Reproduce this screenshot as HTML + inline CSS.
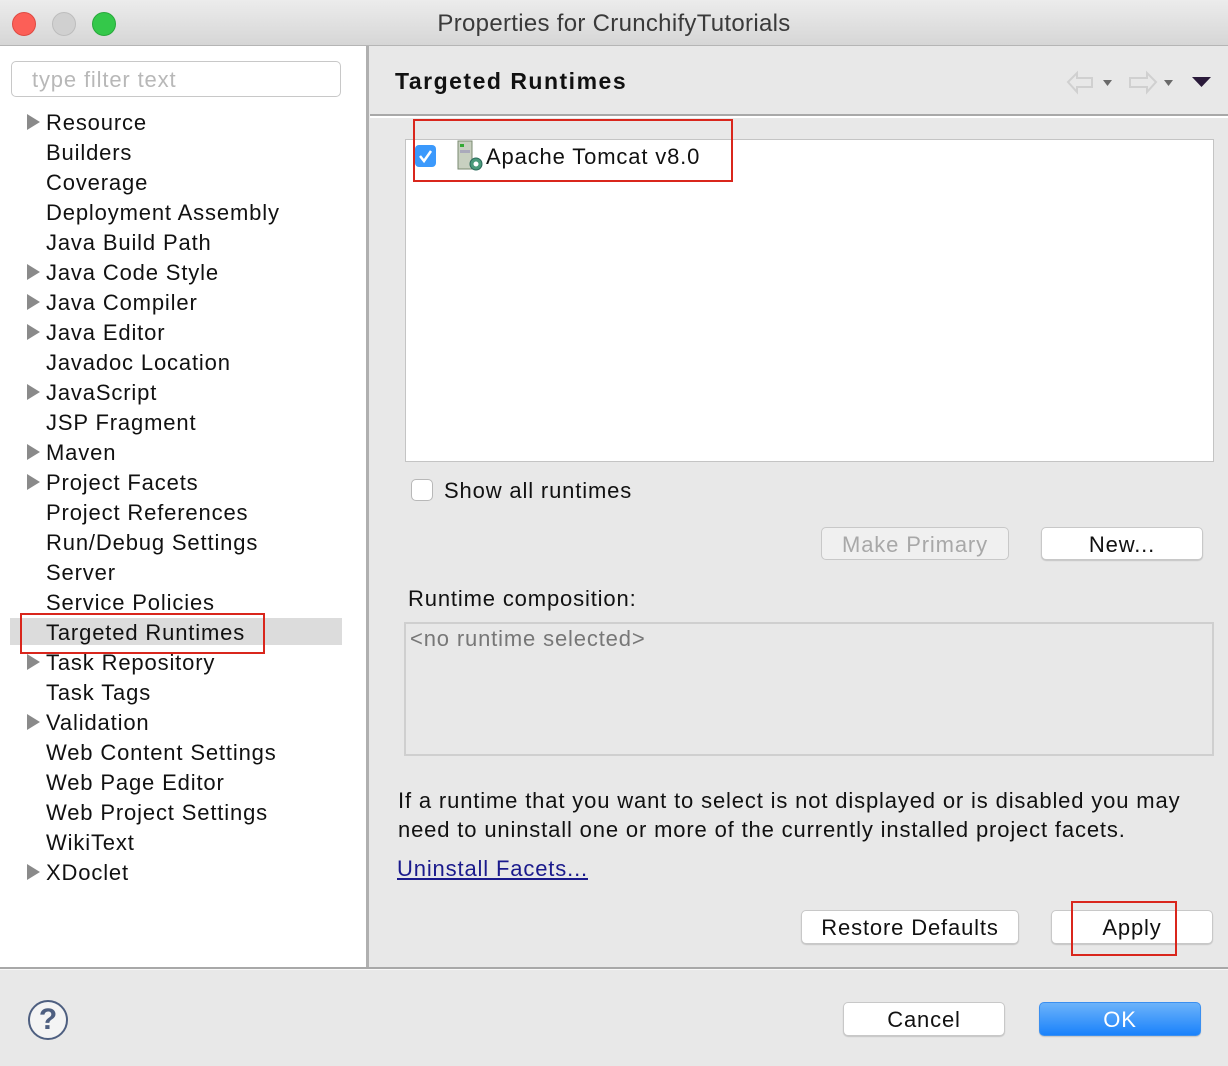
<!DOCTYPE html><html><head><style>
body{margin:0;width:1228px;height:1066px;position:relative;overflow:hidden;background:#e8e8e8;font-family:"Liberation Sans",sans-serif;color:#111;letter-spacing:0.85px}
.a{position:absolute;white-space:nowrap}
.t{font-size:22px;line-height:30px;left:46px}
.tri{position:absolute;left:27px;width:0;height:0;border-top:8px solid transparent;border-bottom:8px solid transparent;border-left:13px solid #8a8a8a}
.btn{position:absolute;background:#fff;border:1px solid #c8c8c8;border-radius:5px;box-shadow:0 1px 1px rgba(0,0,0,.15);font-size:22px;text-align:center;line-height:33px;box-sizing:border-box}
.red{position:absolute;border:2px solid #d9261c;box-sizing:border-box}
</style></head><body>
<div class="a" style="left:0;top:0;width:1228px;height:45px;background:linear-gradient(#ececec,#d6d6d6);border-bottom:1px solid #b5b5b5"></div>
<div class="a" style="left:12px;top:12px;width:24px;height:24px;border-radius:50%;background:#fc5f57;border:1px solid #de4a42;box-sizing:border-box"></div>
<div class="a" style="left:52px;top:12px;width:24px;height:24px;border-radius:50%;background:#d0d0d0;border:1px solid #bdbdbd;box-sizing:border-box"></div>
<div class="a" style="left:92px;top:12px;width:24px;height:24px;border-radius:50%;background:#34c84a;border:1px solid #28a83b;box-sizing:border-box"></div>
<div class="a" style="left:0;width:1228px;top:10px;text-align:center;font-size:24px;color:#3a3a3a;letter-spacing:0.3px">Properties for CrunchifyTutorials</div>
<div class="a" style="left:0;top:46px;width:366px;height:922px;background:#fff"></div>
<div class="a" style="left:366px;top:46px;width:3px;height:922px;background:#b0b0b0"></div>
<div class="a" style="left:11px;top:61px;width:330px;height:36px;border:1px solid #c8c8c8;border-radius:5px;box-sizing:border-box;background:#fff"></div>
<div class="a" style="left:32px;top:67px;font-size:22px;color:#b8b8b8">type filter text</div>
<div class="a" style="left:10px;top:618px;width:332px;height:27px;background:#dcdcdc"></div>
<div class="tri" style="top:114px"></div><div class="tri" style="top:264px"></div><div class="tri" style="top:294px"></div><div class="tri" style="top:324px"></div><div class="tri" style="top:384px"></div><div class="tri" style="top:444px"></div><div class="tri" style="top:474px"></div><div class="tri" style="top:654px"></div><div class="tri" style="top:714px"></div><div class="tri" style="top:864px"></div>
<div class="a t" style="top:108px">Resource<br>Builders<br>Coverage<br>Deployment Assembly<br>Java Build Path<br>Java Code Style<br>Java Compiler<br>Java Editor<br>Javadoc Location<br>JavaScript<br>JSP Fragment<br>Maven<br>Project Facets<br>Project References<br>Run/Debug Settings<br>Server<br>Service Policies<br>Targeted Runtimes<br>Task Repository<br>Task Tags<br>Validation<br>Web Content Settings<br>Web Page Editor<br>Web Project Settings<br>WikiText<br>XDoclet</div>
<div class="red" style="left:20px;top:613px;width:245px;height:41px"></div>
<div class="a" style="left:395px;top:68px;font-size:23px;font-weight:bold;letter-spacing:1.5px">Targeted Runtimes</div>
<svg class="a" style="left:1064px;top:68px" width="150" height="30"><path d="M4 14 L13 5 V10 H28 V19 H13 V24 Z" fill="none" stroke="#d0d0d0" stroke-width="2"/><path d="M39 12 h9 l-4.5 6z" fill="#6a6a6a"/><path d="M92 14 L83 5 V10 H66 V19 H83 V24 Z" fill="none" stroke="#d0d0d0" stroke-width="2"/><path d="M100 12 h9 l-4.5 6z" fill="#6a6a6a"/><path d="M128 9 h19 l-9.5 10z" fill="#2a1a3a"/></svg>
<div class="a" style="left:370px;top:114px;width:858px;height:2px;background:#a8a8a8"></div>
<div class="a" style="left:370px;top:116px;width:858px;height:2px;background:#fff"></div>
<div class="a" style="left:405px;top:139px;width:809px;height:323px;background:#fff;border:1px solid #c4c4c4;box-sizing:border-box"></div>
<div class="a" style="left:415px;top:145px;width:21px;height:22px;border-radius:4px;background:#3b99fc"></div>
<svg class="a" style="left:415px;top:145px" width="21" height="22"><path d="M5 11 L9 16 L16 6" fill="none" stroke="#fff" stroke-width="2.5"/></svg>
<svg class="a" style="left:457px;top:139px" width="28" height="34"><rect x="1" y="2" width="14" height="28" fill="#c8d0c0" stroke="#7a8a70"/><rect x="3" y="5" width="4" height="3" fill="#3a3"/><rect x="3" y="11" width="10" height="3" fill="#aab"/><circle cx="19" cy="25" r="6" fill="#4a9a7a" stroke="#2a6a5a"/><circle cx="19" cy="25" r="2.5" fill="#fff"/></svg>
<div class="a" style="left:486px;top:144px;font-size:22px">Apache Tomcat v8.0</div>
<div class="red" style="left:413px;top:119px;width:320px;height:63px"></div>
<div class="a" style="left:411px;top:479px;width:22px;height:22px;border:1px solid #b8b8b8;border-radius:5px;background:#fff;box-sizing:border-box"></div>
<div class="a" style="left:444px;top:478px;font-size:22px">Show all runtimes</div>
<div class="btn" style="left:821px;top:527px;width:188px;height:33px;background:#f0f0f0;color:#a8a8a8;box-shadow:none">Make Primary</div>
<div class="btn" style="left:1041px;top:527px;width:162px;height:33px">New...</div>
<div class="a" style="left:408px;top:586px;font-size:22px">Runtime composition:</div>
<div class="a" style="left:404px;top:622px;width:810px;height:134px;border:2px solid #cfcfcf;box-sizing:border-box"></div>
<div class="a" style="left:410px;top:626px;font-size:22px;color:#777">&lt;no runtime selected&gt;</div>
<div class="a" style="left:398px;top:787px;font-size:22px;line-height:28.5px">If a runtime that you want to select is not displayed or is disabled you may<br>need to uninstall one or more of the currently installed project facets.</div>
<div class="a" style="left:397px;top:856px;font-size:22px;color:#1a1a8c;text-decoration:underline">Uninstall Facets...</div>
<div class="btn" style="left:801px;top:910px;width:218px;height:34px">Restore Defaults</div>
<div class="btn" style="left:1051px;top:910px;width:162px;height:34px">Apply</div>
<div class="red" style="left:1071px;top:901px;width:106px;height:55px"></div>
<div class="a" style="left:0;top:967px;width:1228px;height:2px;background:#a8a8a8"></div>
<div class="a" style="left:0;top:969px;width:1228px;height:1px;background:#f8f8f8"></div>
<div class="a" style="left:28px;top:1000px;width:40px;height:40px;border:2px solid #4e5f80;border-radius:50%;box-sizing:border-box;background:#f4f4f4;text-align:center;font-size:30px;font-weight:bold;line-height:36px;color:#4e5f80;letter-spacing:0">?</div>
<div class="btn" style="left:843px;top:1002px;width:162px;height:34px">Cancel</div>
<div class="btn" style="left:1039px;top:1002px;width:162px;height:34px;background:linear-gradient(#6cb3fa,#1a82fb);border-color:#3a8ff0;color:#fff">OK</div>
</body></html>
